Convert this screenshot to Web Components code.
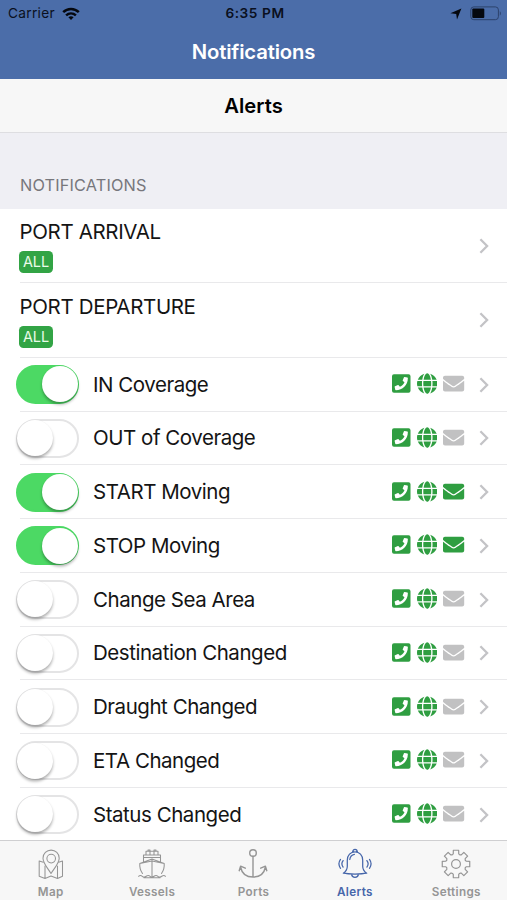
<!DOCTYPE html>
<html lang="en">
<head>
<meta charset="utf-8">
<title>Notifications</title>
<style>
html,body{margin:0;height:900px;overflow:hidden;background:#fff}
body{font-family:Inter,"Liberation Sans",sans-serif;color:#141414}
</style>
</head>
<body>
<alerts-app></alerts-app>
<script>
const define = (name, html, setup) => {
  const t = document.createElement('template');
  t.innerHTML = html;
  customElements.define(name, class extends HTMLElement {
    constructor() {
      super();
      this.attachShadow({mode: 'open'}).append(t.content.cloneNode(true));
    }
    connectedCallback() { if (setup) setup(this, this.shadowRoot); }
  });
};

define('status-bar', `
<style>
:host{display:grid;grid-template-columns:1fr auto 1fr;align-items:center;height:27px;padding:0 5px 0 8px;color:#0a1020;font-size:13.7px;line-height:27px;box-sizing:border-box}
.l,.r{display:flex;align-items:center}
.l{gap:7px;letter-spacing:.3px}
.r{justify-content:flex-end;gap:8px}
.time{font-weight:600;letter-spacing:.55px}
svg{display:block}
</style>
<div class="l"><span>Carrier</span>
<svg width="18" height="14" viewBox="0 0 18 14"><g fill="none" stroke="#05080f" stroke-width="2.5"><path d="M1.2 5.2C5.6.8 12.4.8 16.8 5.2"/><path d="M4.1 8.4C7 5.7 11 5.7 13.9 8.4"/></g><path d="M6.4 10.2Q9 8.2 11.6 10.2L9 13z" fill="#05080f"/></svg></div>
<span class="time">6:35 PM</span>
<div class="r">
<svg width="12" height="12" viewBox="0 0 12 12"><path d="M11.4.6 7 11.5 6.2 6 .4 5.3z" fill="#05080f"/></svg>
<svg width="32" height="15" viewBox="0 0 32 15"><rect x=".8" y=".9" width="27.6" height="12.8" rx="3" fill="none" stroke="#2c426c" stroke-width="1"/><rect x="2.3" y="2.6" width="12" height="9.4" rx="1" fill="#05080f"/><path d="M29.8 5q2.2 2.3 0 4.7z" fill="#2c426c"/></svg>
</div>`);

define('nav-header', `
<style>
:host{display:block;background:#4b6da9;height:79px;color:#fff}
h1{margin:0;height:52px;font-size:20.3px;font-weight:600;line-height:50px;text-align:center;letter-spacing:-.15px}
</style>
<status-bar></status-bar><h1><slot></slot></h1>`);

define('sub-header', `
<style>
:host{display:block;height:54px;box-sizing:border-box;background:#f7f7f7;border-bottom:1px solid #dedee1;font-size:20.2px;font-weight:600;line-height:54px;text-align:center;color:#000;letter-spacing:.05px}
</style><slot></slot>`);

define('section-header', `
<style>
:host{display:flex;align-items:flex-end;height:76px;box-sizing:border-box;padding:0 20px 14px;background:#efeff4;color:#77777c;font-size:16.3px;line-height:20px;letter-spacing:.15px}
</style><slot></slot>`);

define('chevron-icon', `
<style>:host{display:block;flex:none}svg{display:block}</style>
<svg width="10" height="16" viewBox="0 0 10 16"><path d="M1.4 1.3 8.1 8 1.4 14.7" fill="none" stroke="#c3c3c6" stroke-width="2.3"/></svg>`);

define('port-row', `
<style>
:host{display:flex;height:74.4px;margin-left:19.5px;padding-right:18.5px;box-sizing:border-box;border-bottom:1px solid #e9e9eb;align-items:center;justify-content:space-between}
.name{font-size:20.5px;line-height:26px;letter-spacing:-.35px;margin-top:1px}
.tag{display:block;width:34px;height:22px;box-sizing:border-box;margin:6px 0 0 -.5px;border-radius:4.5px;background:#32a445;color:#eafbe9;font-size:14.4px;line-height:22px;text-align:center;letter-spacing:0}
</style>
<div><div class="name"><slot></slot></div><span class="tag">ALL</span></div><chevron-icon></chevron-icon>`);

define('toggle-switch', `
<style>
:host{display:block;flex:none;width:63px;height:39px;box-sizing:border-box;border-radius:20px;border:2px solid #e4e4e5;background:#fff}
i{display:block;width:36px;height:36px;margin:-.7px 0 0 -1px;border-radius:50%;background:#fff;box-shadow:0 2.5px 3px rgba(0,0,0,.3),0 0 1px rgba(0,0,0,.06)}
:host([on]){background:#4cd964;border-color:#4cd964}
:host([on]) i{margin-left:23.7px}
</style><i></i>`);

define('channel-icons', `
<style>
:host{display:flex;align-items:center;gap:6px;flex:none;color:#2f9e41}
svg{display:block;height:21.2px;fill:currentColor}
.off{color:#c1c1c2}
</style>
<svg width="18.5" viewBox="0 0 448 512"><path d="M400 32H48A48 48 0 0 0 0 80v352a48 48 0 0 0 48 48h352a48 48 0 0 0 48-48V80a48 48 0 0 0-48-48zM94 416c-7.033 0-13.057-4.873-14.616-11.627l-14.998-65a15 15 0 0 1 8.707-17.16l69.998-29.999a15 15 0 0 1 17.518 4.289l30.997 37.885c48.944-22.963 88.297-62.858 110.781-110.78l-37.886-30.997a15.001 15.001 0 0 1-4.289-17.518l30-69.998a15 15 0 0 1 17.16-8.707l65 14.998A14.997 14.997 0 0 1 384 126c0 160.292-129.945 290-290 290z"/></svg>
<svg width="20.5" viewBox="0 0 496 512"><path d="M336.5 160C322 70.7 287.8 8 248 8s-74 62.7-88.5 152h177zM152 256c0 22.2 1.2 43.5 3.3 64h185.3c2.1-20.5 3.3-41.8 3.3-64s-1.2-43.5-3.3-64H155.3c-2.1 20.5-3.3 41.8-3.3 64zm324.7-96c-28.6-67.9-86.5-120.4-158-141.6 24.4 33.8 41.2 84.7 50 141.6h108zM177.2 18.4C105.8 39.6 47.8 92.1 19.3 160h108c8.7-56.9 25.5-107.8 49.9-141.6zM487.4 192H372.7c2.1 21 3.3 42.5 3.3 64s-1.2 43-3.3 64h114.6c5.5-20.5 8.6-41.8 8.6-64s-3.1-43.5-8.5-64zM120 256c0-21.5 1.2-43 3.3-64H8.6C3.2 212.5 0 233.8 0 256s3.2 43.5 8.6 64h114.6c-2-21-3.2-42.5-3.2-64zm39.5 96c14.5 89.3 48.7 152 88.5 152s74-62.7 88.5-152h-177zm159.3 141.6c71.4-21.2 129.4-73.7 158-141.6h-108c-8.8 56.9-25.6 107.8-50 141.6zM19.3 352c28.6 67.9 86.5 120.4 158 141.6-24.4-33.8-41.2-84.7-50-141.6h-108z"/></svg>
<svg class="mail" width="21.2" viewBox="0 0 512 512"><path d="M502.3 190.8c3.9-3.1 9.7-.2 9.7 4.7V400c0 26.5-21.5 48-48 48H48c-26.5 0-48-21.5-48-48V195.6c0-5 5.7-7.8 9.7-4.7 22.4 17.4 52.1 39.5 154.1 113.6 21.1 15.4 56.7 47.8 92.2 47.6 35.7.3 72-32.8 92.3-47.6 102-74.1 131.6-96.3 154-113.7zM256 320c23.2.4 56.6-29.2 73.4-41.4 132.7-96.3 142.8-104.7 173.4-128.7 5.8-4.5 9.2-11.5 9.2-18.9v-19c0-26.5-21.5-48-48-48H48c-26.5 0-48 21.5-48 48v19c0 7.4 3.4 14.3 9.2 18.9 30.6 23.9 40.7 32.4 173.4 128.7 16.8 12.2 50.2 41.8 73.4 41.4z"/></svg>`,
(el, root) => root.querySelector('.mail').classList.toggle('off', !el.hasAttribute('mail')));

define('alert-row', `
<style>
:host{display:flex;align-items:center;height:53.75px;box-sizing:border-box;padding:0 18.5px 0 16px;background:linear-gradient(#e9e9eb,#e9e9eb) 20px 100%/100% 1px no-repeat}
.name{flex:1;margin-left:14px;font-size:20.5px;line-height:30px;letter-spacing:-.46px}
channel-icons{margin:-2px 14px 0 0}
</style>
<toggle-switch></toggle-switch><span class="name"><slot></slot></span><channel-icons></channel-icons><chevron-icon></chevron-icon>`,
(el, root) => {
  root.querySelector('toggle-switch').toggleAttribute('on', el.hasAttribute('on'));
  const old = root.querySelector('channel-icons');
  const icons = document.createElement('channel-icons');
  icons.toggleAttribute('mail', el.hasAttribute('mail'));
  old.replaceWith(icons);
});

define('tab-item', `
<style>
:host{display:flex;flex-direction:column;align-items:center;color:#959595;font-size:11.7px;font-weight:600;letter-spacing:.35px;line-height:14px}
:host([active]){color:#4666aa}
::slotted(svg){display:block;width:34px;height:32px;margin:6.5px 0 5.5px;fill:none;stroke:currentColor;stroke-width:1.05;stroke-linejoin:round;stroke-linecap:round}
</style><slot name="icon"></slot><span><slot></slot></span>`);

const gear = (() => {
  const pts = [];
  for (let k = 0; k < 8; k++) {
    for (const [r, a] of [[10.6, -15], [14, -11], [14, 11], [10.6, 15]]) {
      const t = (k * 45 + a - 90) * Math.PI / 180;
      pts.push((17 + r * Math.cos(t)).toFixed(2) + ' ' + (16 + r * Math.sin(t)).toFixed(2));
    }
  }
  let d = 'M' + pts[0];
  pts.slice(1).forEach((p, i) => d += (i + 1) % 4 === 0 ? 'A2.2 2.2 0 0 0 ' + p : 'L' + p);
  return d + 'A2.2 2.2 0 0 0 ' + pts[0] + 'z';
})();

define('tab-bar', `
<style>
:host{display:grid;grid-template-columns:repeat(5,1fr);height:60px;box-sizing:border-box;background:#f7f7f7;border-top:1px solid #cfcfd1}
</style>
<tab-item><svg slot="icon" viewBox="0 0 34 32"><path d="M17 25.5C13 19 9 15.2 9 10.2a8.1 8.1 0 0 1 16.2 0C25.2 15.2 21 19 17 25.5z"/><circle cx="17.2" cy="10.6" r="4.3"/><path d="M9.3 14.2 5.2 13v15.2l5.8 2.2 6-2.4 6.5 2.4 5-2.2V13l-3.9 1.2M11 18v12.4M23.5 18v12.4"/></svg>Map</tab-item>
<tab-item><svg slot="icon" viewBox="0 0 34 32"><path d="M7.5 25.5C5 22 4.5 19 4.8 15.5L17 11l12.2 4.5c.3 3.5-.2 6.5-2.7 10M4.8 15.5 17 13l12.2 2.5M17 11v17.5M8.5 13.6V7h17v6.6M8.5 9.4h17M11 7V3.2h12V7M13 3V2h2v5M19 7V2h2v1M3.5 28.3q2-1.5 3.8 0t3.9 0 3.9 0 3.9 0 3.9 0 3.9 0 3.7 0M9 29.8h16"/></svg>Vessels</tab-item>
<tab-item><svg slot="icon" viewBox="0 0 34 32" style="stroke-width:1.4"><circle cx="17" cy="5" r="3.3"/><path d="M17 8.3V29M4.7 19.5C6 26 11 29 17 29s11-3 12.3-9.5M3.2 22.7l1.4-4.5 4.7 2M30.8 22.7l-1.4-4.5-4.7 2"/></svg>Ports</tab-item>
<tab-item active><svg slot="icon" viewBox="0 0 34 32" style="stroke-width:1.25"><path d="M5.3 25.2c2.4-1.6 4-3.3 4-7v-6c0-5 3.3-8.4 7.7-8.4s7.7 3.4 7.7 8.4v6c0 3.7 1.6 5.4 4 7-5.5 1.1-18 1.1-23.4 0zM14.8 4c0-3.6 4.4-3.6 4.4 0M13.5 26.2c.6 4.3 6.4 4.3 7 0M11.8 11.5c.4-3 2-4.6 4.6-5.1M5.1 12.6c-1.6 2.1-1.6 4.4 0 6.5M2.5 11.4c-2.2 3.1-2.2 5.8 0 8.9M28.9 12.6c1.6 2.1 1.6 4.4 0 6.5M31.5 11.4c2.2 3.1 2.2 5.8 0 8.9"/></svg>Alerts</tab-item>
<tab-item><svg slot="icon" viewBox="0 0 34 32" style="stroke-width:1.2"><path d="${gear}"/><circle cx="17" cy="16" r="4.4"/></svg>Settings</tab-item>`);

define('alerts-app', `
<style>
:host{display:flex;flex-direction:column;width:507px;height:900px;background:#fff;overflow:hidden}
main{flex:1;min-height:0;overflow:hidden}
</style>
<nav-header>Notifications</nav-header>
<sub-header>Alerts</sub-header>
<main>
<section-header>NOTIFICATIONS</section-header>
<port-row>PORT ARRIVAL</port-row>
<port-row>PORT DEPARTURE</port-row>
<alert-row on>IN Coverage</alert-row>
<alert-row>OUT of Coverage</alert-row>
<alert-row on mail>START Moving</alert-row>
<alert-row on mail>STOP Moving</alert-row>
<alert-row>Change Sea Area</alert-row>
<alert-row>Destination Changed</alert-row>
<alert-row>Draught Changed</alert-row>
<alert-row>ETA Changed</alert-row>
<alert-row>Status Changed</alert-row>
</main>
<tab-bar></tab-bar>`);
</script>
</body>
</html>
